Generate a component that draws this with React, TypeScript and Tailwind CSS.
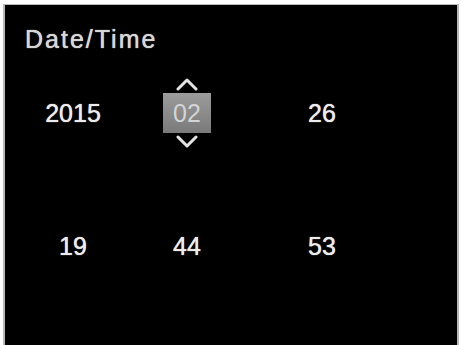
const font = { fontFamily: '"Liberation Sans", Arial, sans-serif' };

const Chevron = ({ up }: { up?: boolean }) => (
    <svg width="22" height="14" viewBox="0 0 22 14" className="block">
        <polyline
            points={up ? '2,12 11,3 20,12' : '2,2 11,11 20,2'}
            fill="none"
            stroke="#e4e4e4"
            strokeWidth="3"
            strokeLinecap="round"
            strokeLinejoin="round"
        />
    </svg>
);

const Cell = ({ value, w }: { value: string; w: string }) => (
    <div className={`${w} text-center text-[25px] leading-none text-[#ececec] [text-shadow:0_0_1px_#ffffff]`}>{value}</div>
);

export default function App() {
    return (
        <div className="w-[462px] h-[345px] bg-white pt-[4px] pl-[3px] pr-[3px] overflow-hidden" style={font}>
            <div className="h-full bg-black border-l-2 border-t border-r-2 border-[#b8b8b8] pl-[18px] pt-[22px]">
                {/* Title */}
                <h1 className="text-[25px] leading-none text-[#d6d6d6] tracking-[2px] ml-[2px] [text-shadow:0_0_1px_#ffffff]">Date/Time</h1>

                {/* Date row */}
                <div className="flex items-center mt-[25px]">
                    <Cell value="2015" w="w-[100px]" />
                    <div className="w-[128px] flex flex-col items-center gap-[2px]">
                        <Chevron up />
                        <div className="w-[48px] h-[40px] bg-gradient-to-b from-[#9c9c9c] to-[#7a7a7a] flex items-center justify-center text-[25px] leading-none text-[#d4d4d4]">
                            02
                        </div>
                        <Chevron />
                    </div>
                    <Cell value="26" w="w-[142px]" />
                </div>

                {/* Time row */}
                <div className="flex items-center mt-[85px]">
                    <Cell value="19" w="w-[100px]" />
                    <Cell value="44" w="w-[128px]" />
                    <Cell value="53" w="w-[142px]" />
                </div>
            </div>
        </div>
    );
}
